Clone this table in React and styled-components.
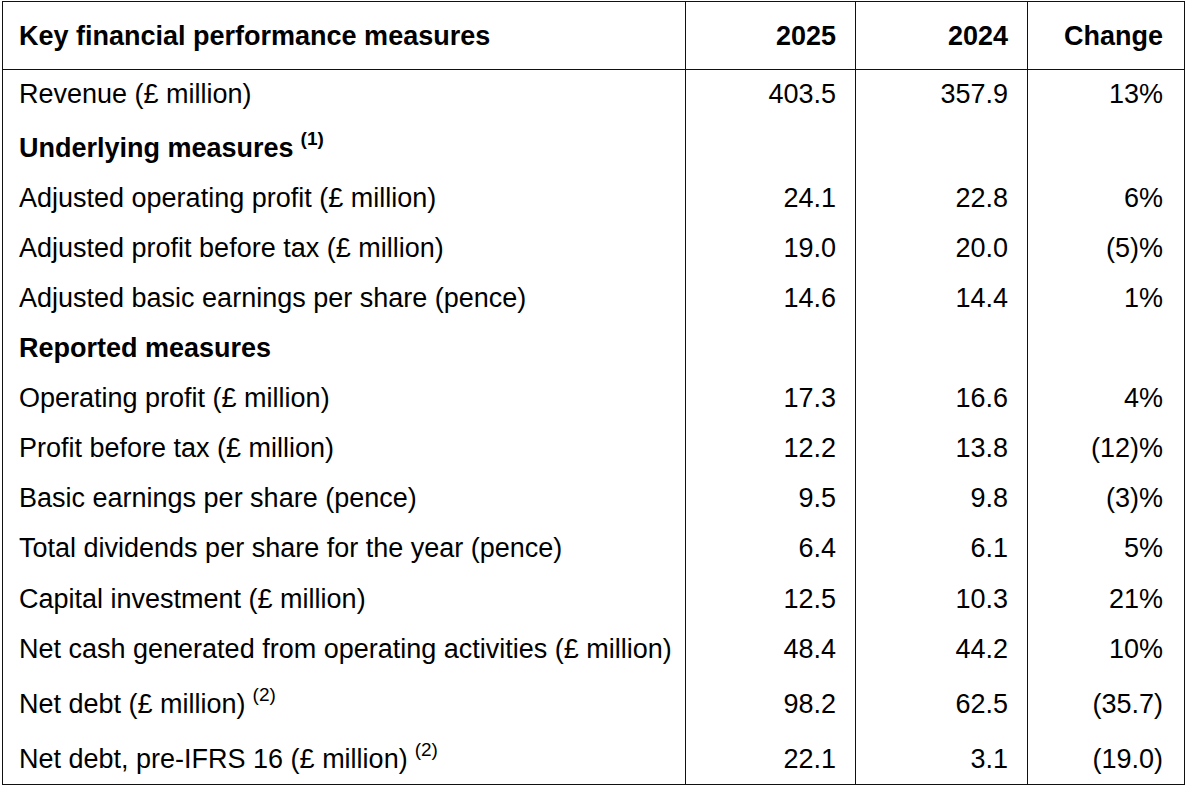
import React from "react";
import styled, { createGlobalStyle } from "styled-components";

const Global = createGlobalStyle`
  html, body { margin: 0; padding: 0; background: #fff; }
  body { font-family: "Liberation Sans", Arial, sans-serif; color: #000; }
`;

const Page = styled.div`
  padding: 1px 0 0 2px;
`;

const Table = styled.table`
  border-collapse: collapse;
  width: 1182px;
  table-layout: fixed;
  border: 1px solid #111;
  font-size: 27px;
  line-height: 30px;
`;

const Col = styled.col`
  width: ${(p) => p.$w}px;
`;

const HeadCell = styled.th`
  height: 67px;
  padding: 0 ${(p) => (p.$last ? 21 : 19)}px 0 16px;
  border: 1px solid #111;
  text-align: ${(p) => (p.$right ? "right" : "left")};
  font-weight: 700;
  vertical-align: middle;
  white-space: nowrap;
`;

const Row = styled.tr`
  height: ${(p) => p.$h}px;
`;

const Cell = styled.td`
  padding: ${(p) => (p.$sup ? "4px" : "0")} ${(p) => (p.$last ? 21 : 19)}px 0 16px;
  border-left: 1px solid #111;
  border-right: 1px solid #111;
  text-align: ${(p) => (p.$right ? "right" : "left")};
  font-weight: ${(p) => (p.$bold ? 700 : 400)};
  vertical-align: middle;
  white-space: nowrap;
`;

const Sup = styled.sup`
  font-size: 19px;
  line-height: 0;
  vertical-align: 0;
  position: relative;
  top: -12px;
  margin-left: 7px;
`;

const rows = [
  { label: "Revenue (£ million)", v: ["403.5", "357.9", "13%"], h: 49 },
  { label: "Underlying measures", sup: "(1)", bold: true, v: ["", "", ""], h: 54 },
  { label: "Adjusted operating profit (£ million)", v: ["24.1", "22.8", "6%"], h: 50 },
  { label: "Adjusted profit before tax (£ million)", v: ["19.0", "20.0", "(5)%"], h: 50 },
  { label: "Adjusted basic earnings per share (pence)", v: ["14.6", "14.4", "1%"], h: 50 },
  { label: "Reported measures", bold: true, v: ["", "", ""], h: 50 },
  { label: "Operating profit (£ million)", v: ["17.3", "16.6", "4%"], h: 50 },
  { label: "Profit before tax (£ million)", v: ["12.2", "13.8", "(12)%"], h: 50 },
  { label: "Basic earnings per share (pence)", v: ["9.5", "9.8", "(3)%"], h: 50 },
  { label: "Total dividends per share for the year (pence)", v: ["6.4", "6.1", "5%"], h: 51 },
  { label: "Capital investment (£ million)", v: ["12.5", "10.3", "21%"], h: 50 },
  { label: "Net cash generated from operating activities (£ million)", v: ["48.4", "44.2", "10%"], h: 51 },
  { label: "Net debt (£ million)", sup: "(2)", v: ["98.2", "62.5", "(35.7)"], h: 55 },
  { label: "Net debt, pre-IFRS 16 (£ million)", sup: "(2)", v: ["22.1", "3.1", "(19.0)"], h: 55 },
];

export default function App() {
  return (
    <>
      <Global />
      <Page>
        <Table>
          <colgroup>
            <Col $w={683} />
            <Col $w={170} />
            <Col $w={172} />
            <Col $w={157} />
          </colgroup>
          <thead>
            <tr>
              <HeadCell>Key financial performance measures</HeadCell>
              <HeadCell $right>2025</HeadCell>
              <HeadCell $right>2024</HeadCell>
              <HeadCell $right $last>Change</HeadCell>
            </tr>
          </thead>
          <tbody>
            {rows.map((r) => (
              <Row key={r.label} $h={r.h}>
                <Cell $bold={r.bold} $sup={!!r.sup}>
                  {r.label}
                  {r.sup && <Sup>{r.sup}</Sup>}
                </Cell>
                <Cell $right $sup={!!r.sup}>{r.v[0]}</Cell>
                <Cell $right $sup={!!r.sup}>{r.v[1]}</Cell>
                <Cell $right $last $sup={!!r.sup}>{r.v[2]}</Cell>
              </Row>
            ))}
          </tbody>
        </Table>
      </Page>
    </>
  );
}
